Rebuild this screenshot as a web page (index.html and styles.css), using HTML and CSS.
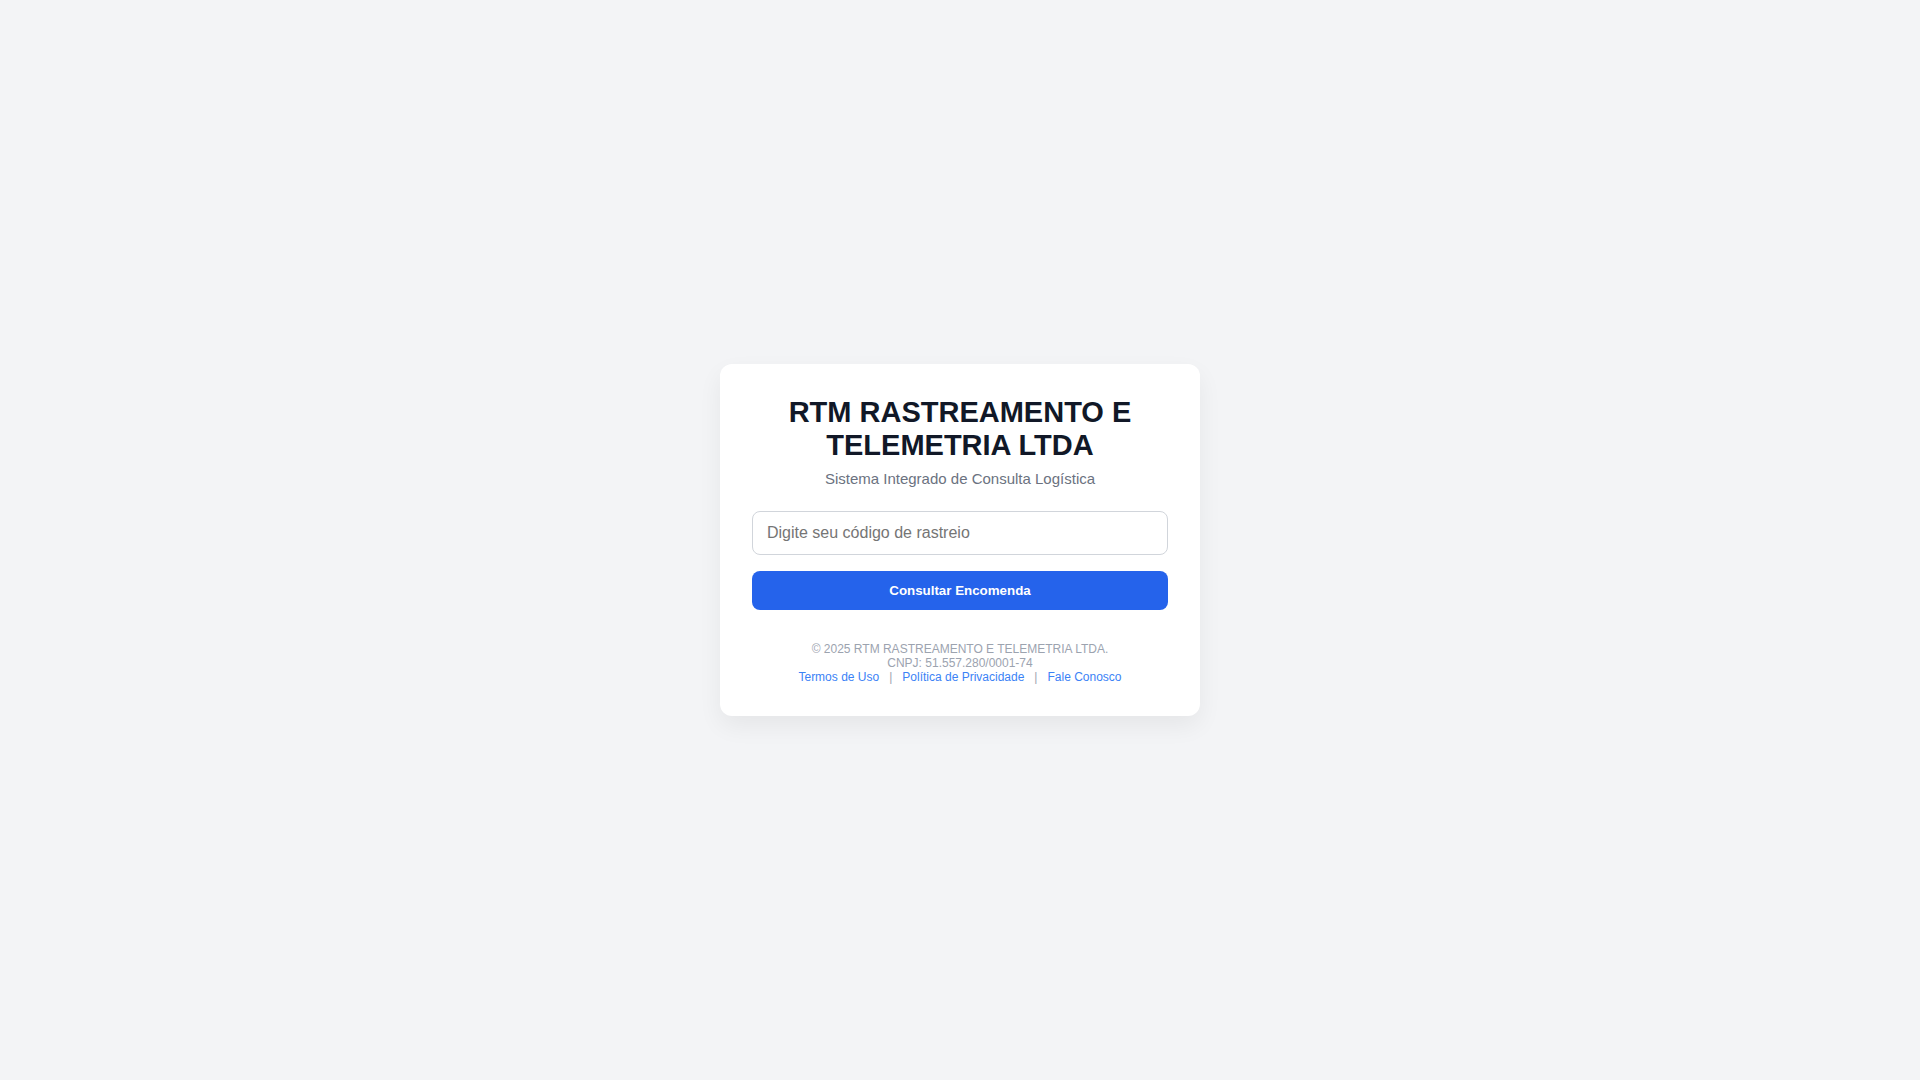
FILE: index.html
```html
<!DOCTYPE html>
<html lang="pt-BR">
<head>
    <meta charset="UTF-8">
    <meta name="viewport" content="width=device-width, initial-scale=1.0">
    <title>RTM RASTREAMENTO E TELEMETRIA LTDA</title>
    <link rel="stylesheet" href="styles.css">
</head>
<body>
    <main class="card">
        <h1>RTM RASTREAMENTO E TELEMETRIA LTDA</h1>
        <p class="subtitle">Sistema Integrado de Consulta Logística</p>
        <form>
            <input type="text" name="codigo" placeholder="Digite seu código de rastreio" aria-label="Código de rastreio" required>
            <button type="submit">Consultar Encomenda</button>
        </form>
        <footer>
            © 2025 RTM RASTREAMENTO E TELEMETRIA LTDA.<br>
            CNPJ: 51.557.280/0001-74<br>
            <a href="#termos">Termos de Uso</a> &nbsp; | &nbsp;
            <a href="#privacidade">Política de Privacidade</a> &nbsp; | &nbsp;
            <a href="#contato">Fale Conosco</a>
        </footer>
    </main>
</body>
</html>
```
FILE: styles.css
```css
* {
    box-sizing: border-box;
}
body {
    font-family: "Liberation Sans", Arial, sans-serif;
    margin: 0;
    min-height: 100vh;
    display: flex;
    justify-content: center;
    align-items: center;
    background-color: #f3f4f6;
}
.card {
    width: 100%;
    max-width: 480px;
    padding: 32px;
    background: #fff;
    border-radius: 12px;
    box-shadow: 0 10px 25px rgba(0, 0, 0, 0.06);
    text-align: center;
}
h1 {
    margin: 0 0 8px;
    font-size: 29px;
    color: #111827;
}
.subtitle {
    margin: 0 0 24px;
    font-size: 15px;
    color: #6b7280;
}
input {
    display: block;
    width: 100%;
    margin-bottom: 16px;
    padding: 12px 14px;
    font-family: inherit;
    font-size: 16px;
    border: 1px solid #d1d5db;
    border-radius: 8px;
}
button {
    width: 100%;
    padding: 12px;
    font-family: inherit;
    font-weight: bold;
    color: #fff;
    background-color: #2563eb;
    border: none;
    border-radius: 8px;
    cursor: pointer;
}
footer {
    margin-top: 32px;
    font-size: 12px;
    color: #9ca3af;
}
footer a {
    color: #3b82f6;
    text-decoration: none;
}
```
